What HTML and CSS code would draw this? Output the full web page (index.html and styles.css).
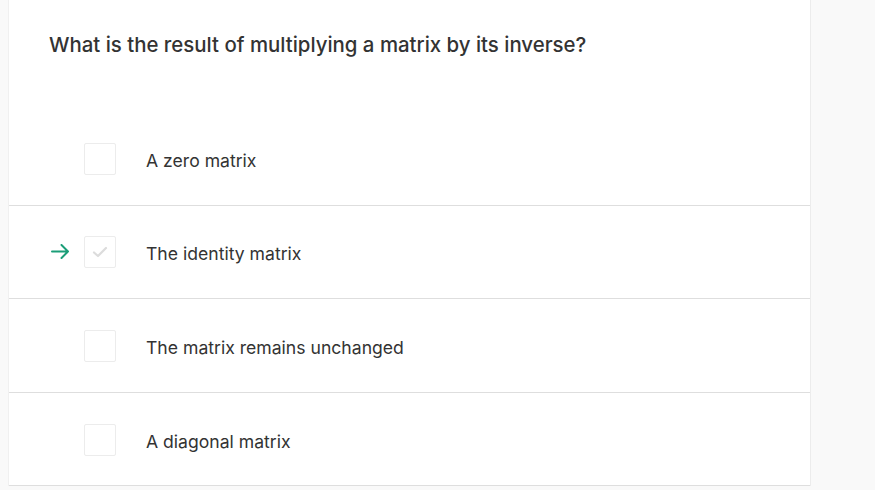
FILE: index.html
```html
<!DOCTYPE html>
<html>
<head>
<meta charset="utf-8">
<link rel="stylesheet" href="styles.css">
</head>
<body>
<div class="page">
  <div class="card">
    <h1 class="question">What is the result of multiplying a matrix by its inverse?</h1>
    <ul class="options">
      <li class="option">
        <span class="marker"></span>
        <span class="box"></span>
        <span class="label">A zero matrix</span>
      </li>
      <li class="option">
        <span class="marker">
          <svg width="19" height="15" viewBox="0 0 19 15"><path d="M1 7.5H17M10.5 1l6.5 6.5-6.5 6.5" fill="none" stroke="#1b9e78" stroke-width="2" stroke-linecap="round" stroke-linejoin="round"/></svg>
        </span>
        <span class="box">
          <svg width="16" height="12" viewBox="0 0 16 12"><path d="M2 6.5l4 3.5 8-8" fill="none" stroke="#dcdcdc" stroke-width="2.2" stroke-linecap="round" stroke-linejoin="round"/></svg>
        </span>
        <span class="label">The identity matrix</span>
      </li>
      <li class="option">
        <span class="marker"></span>
        <span class="box"></span>
        <span class="label">The matrix remains unchanged</span>
      </li>
      <li class="option">
        <span class="marker"></span>
        <span class="box"></span>
        <span class="label">A diagonal matrix</span>
      </li>
    </ul>
  </div>
</div>
</body>
</html>
```

FILE: styles.css
```css
html, body {
  margin: 0;
  padding: 0;
  background: #f9f9f9;
  font-family: "Inter", "Roboto", "Liberation Sans", sans-serif;
  color: #333;
}
.page {
  padding-left: 8px;
  width: 803px;
}
.card {
  background: #fff;
  border-left: 1px solid #f0f0f0;
  border-right: 1px solid #ececec;
  padding-top: 31px;
}
.question {
  margin: 0;
  padding: 0 40px;
  font-size: 20.4px;
  font-weight: 500;
  line-height: 28px;
  color: #333;
  letter-spacing: 0;
}
.options {
  list-style: none;
  margin: 53px 0 0 0;
  padding: 0;
}
.option {
  display: flex;
  align-items: center;
  height: 92.6px;
  border-bottom: 1px solid #dedede;
  padding-left: 42px;
}
.marker {
  width: 22px;
  height: 15px;
  display: flex;
  align-items: center;
  margin-right: 11px;
}
.box {
  width: 30px;
  height: 30px;
  border: 1px solid #ececec;
  border-radius: 2px;
  display: flex;
  align-items: center;
  justify-content: center;
  box-sizing: content-box;
  margin-top: 1px;
}
.label {
  margin-left: 30px;
  margin-top: 4px;
  font-size: 17.6px;
  color: #333;
}
```
